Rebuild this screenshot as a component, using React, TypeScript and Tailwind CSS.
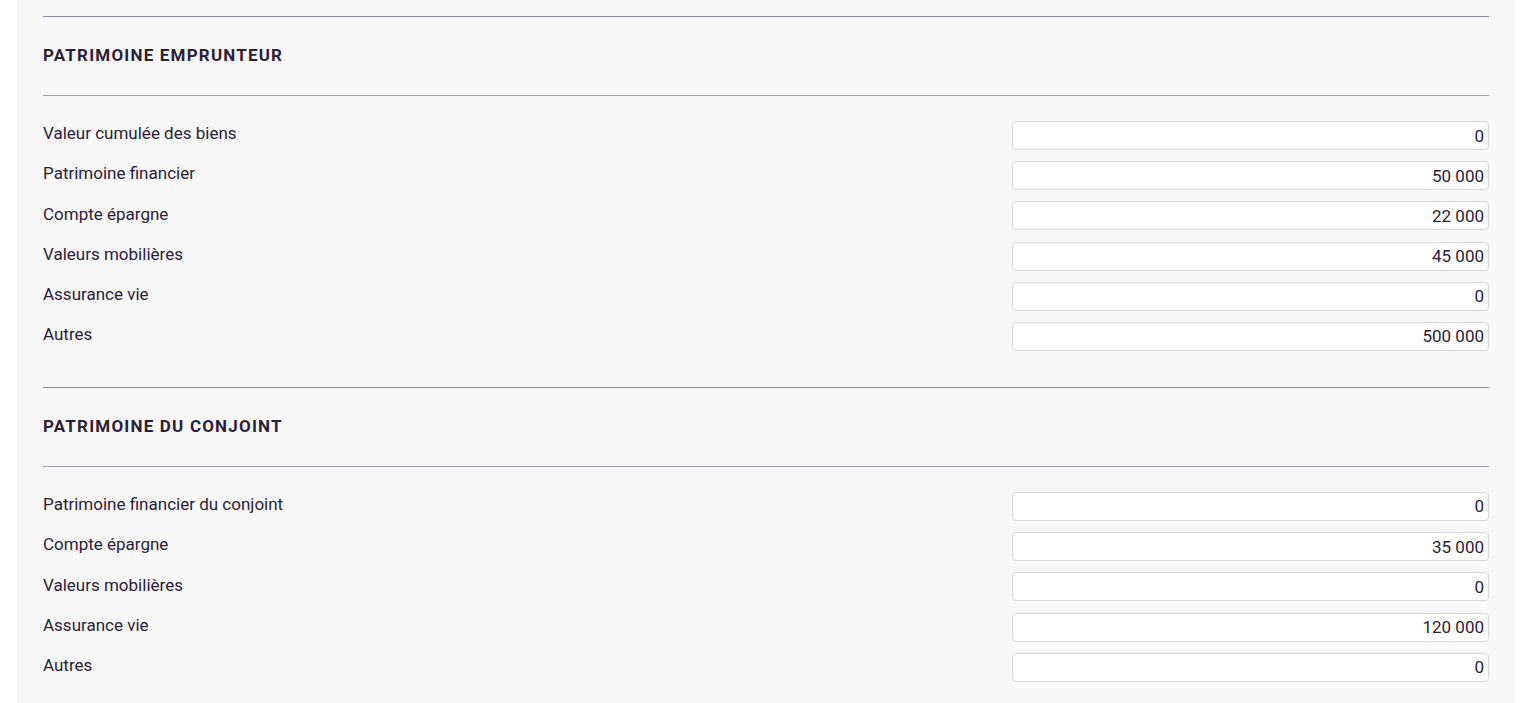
import React from "react";

interface Field {
  label: string;
  value: string;
}

interface Section {
  title: string;
  fields: Field[];
}

const sections: Section[] = [
  {
    title: "Patrimoine emprunteur",
    fields: [
      { label: "Valeur cumulée des biens", value: "0" },
      { label: "Patrimoine financier", value: "50 000" },
      { label: "Compte épargne", value: "22 000" },
      { label: "Valeurs mobilières", value: "45 000" },
      { label: "Assurance vie", value: "0" },
      { label: "Autres", value: "500 000" },
    ],
  },
  {
    title: "Patrimoine du conjoint",
    fields: [
      { label: "Patrimoine financier du conjoint", value: "0" },
      { label: "Compte épargne", value: "35 000" },
      { label: "Valeurs mobilières", value: "0" },
      { label: "Assurance vie", value: "120 000" },
      { label: "Autres", value: "0" },
    ],
  },
];

export default function App() {
  return (
    <div
      className="min-h-[703px] bg-white text-[#2a2139]"
      style={{ fontFamily: "Roboto, 'Liberation Sans', sans-serif" }}
    >
      <div className="ml-[17px] min-h-[703px] w-[1498px] bg-[#f8f8f8] px-[26px] pt-[16px]">
        {sections.map((section) => (
          <section key={section.title} className="pb-[36px]">
            <div className="border-t border-[#8f88a0]" />
            <div className="flex h-[78px] items-center">
              <h2 className="text-[17px] font-bold uppercase tracking-[0.07em]">
                {section.title}
              </h2>
            </div>
            <div className="border-t border-[#a29cb0]" />

            {/* Fields */}
            <div className="flex flex-col gap-[11.2px] pt-[25px]">
              {section.fields.map((field, i) => (
                <div key={i} className="flex items-center justify-between">
                  <label className="-mt-[3px] text-[17px]">{field.label}</label>
                  <input
                    type="text"
                    defaultValue={field.value}
                    className="h-[29px] w-[477px] rounded-[4px] border border-[#d9d8dc] bg-white pl-[8px] pr-[4px] text-right text-[17px] text-[#2a2139] outline-none"
                  />
                </div>
              ))}
            </div>
          </section>
        ))}
      </div>
    </div>
  );
}
